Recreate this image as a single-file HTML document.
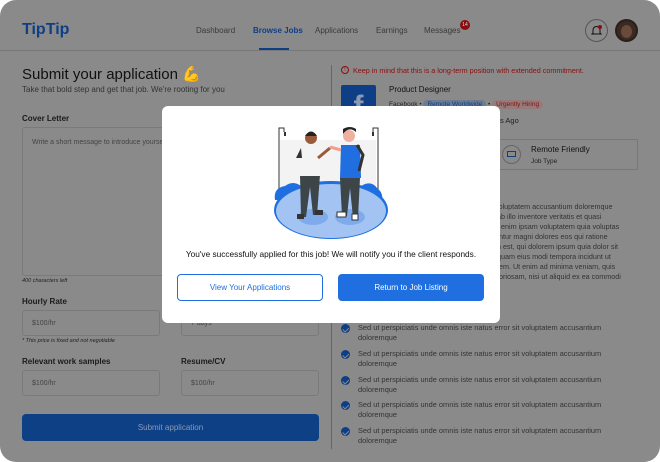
<!DOCTYPE html>
<html><head><meta charset="utf-8"><style>
*{margin:0;padding:0;box-sizing:border-box}
body{width:660px;height:462px;background:#fff;font-family:"Liberation Sans",sans-serif;position:relative;overflow:hidden;color:#1b1b1b}
.card{position:absolute;left:0;top:0;width:660px;height:462px;background:#8a8a8a;border-radius:16px}
.a{position:absolute;white-space:nowrap}
.nav{font-size:8px;color:#3a3a3a;top:26px}
.inp{position:absolute;border:1px solid #7a7a7a;border-radius:3px;font-size:7px;color:#444;padding-left:9px;display:flex;align-items:center}
.lab{font-size:8px;font-weight:bold;color:#1b1b1b}
.lt{font-size:7.2px;color:#333;line-height:10px}
.chk{position:absolute;left:341px;width:9px;height:9px;border-radius:50%;background:#0e3f86}
.chk:after{content:"";position:absolute;left:2.5px;top:1.5px;width:2.5px;height:4.5px;border:solid #8a8a8a;border-width:0 1.2px 1.2px 0;transform:rotate(45deg)}
.ct{position:absolute;left:358px;font-size:7.4px;color:#333;line-height:9.5px;width:262px}
.modal{position:absolute;left:162px;top:106px;width:338px;height:217px;background:#fff;border-radius:6px}
.btn{position:absolute;top:168px;width:146px;height:27px;border-radius:4px;font-size:8px;display:flex;align-items:center;justify-content:center}
</style></head><body>
<div class="card">
<div class="a" style="left:22px;top:21px;font-size:16px;font-weight:bold;color:#0e3f86">TipTip</div>
<div class="a nav" style="left:196px">Dashboard</div>
<div class="a nav" style="left:253px;color:#0e3f86;font-weight:bold">Browse Jobs</div>
<div class="a" style="left:259px;top:48px;width:30px;height:2px;background:#0e3f86"></div>
<div class="a nav" style="left:315px">Applications</div>
<div class="a nav" style="left:376px">Earnings</div>
<div class="a nav" style="left:424px">Messages</div>
<div class="a" style="left:460px;top:20px;width:10px;height:10px;border-radius:50%;background:#8a0d0d;color:#ddd;font-size:5px;text-align:center;line-height:10px">14</div>
<div class="a" style="left:585px;top:19px;width:23px;height:23px;border-radius:50%;border:1px solid #555"></div>
<svg class="a" style="left:590px;top:24px" width="13" height="13" viewBox="0 0 13 13"><path d="M3 9V6a3.5 3.5 0 0 1 7 0v3l1 1H2z" fill="none" stroke="#111" stroke-width="1"/><circle cx="10" cy="3" r="2" fill="#8a0d0d"/></svg>
<div class="a" style="left:615px;top:19px;width:23px;height:23px;border-radius:50%;background:#3a2a22;border:2px solid #2a1e18"></div>
<div class="a" style="left:621px;top:25px;width:11px;height:13px;border-radius:50%;background:#6a4a3a"></div>
<div class="a" style="left:0;top:50px;width:660px;height:1px;background:#777"></div>

<div class="a" style="left:22px;top:65px;font-size:15px;color:#111">Submit your application <span style="color:#7a5a3c">💪</span></div>
<div class="a" style="left:22px;top:85px;font-size:8px;color:#333">Take that bold step and get that job. We're rooting for you</div>
<div class="a lab" style="left:22px;top:114px">Cover Letter</div>
<div class="inp" style="left:22px;top:127px;width:297px;height:149px;align-items:flex-start;padding-top:9px;line-height:11px;white-space:normal">Write a short message to introduce yourself and explain why you're the best fit for this job.</div>
<div class="a" style="left:22px;top:278px;font-size:5.5px;font-style:italic;color:#222">400 characters left</div>
<div class="a lab" style="left:22px;top:297px">Hourly Rate</div>
<div class="inp" style="left:22px;top:310px;width:138px;height:26px">$100/hr</div>
<div class="inp" style="left:181px;top:310px;width:138px;height:26px">7 days</div>
<div class="a" style="left:22px;top:338px;font-size:5.5px;font-style:italic;color:#222">* This price is fixed and not negotiable</div>
<div class="a lab" style="left:22px;top:357px">Relevant work samples</div>
<div class="a lab" style="left:181px;top:357px">Resume/CV</div>
<div class="inp" style="left:22px;top:370px;width:138px;height:26px">$100/hr</div>
<div class="inp" style="left:181px;top:370px;width:138px;height:26px">$100/hr</div>
<div class="a" style="left:22px;top:414px;width:297px;height:27px;background:#0e4086;border-radius:4px;color:#8a9ab5;font-size:8px;display:flex;align-items:center;justify-content:center">Submit application</div>

<div class="a" style="left:331px;top:65px;width:1px;height:384px;background:#666"></div>
<div class="a" style="left:341px;top:66px;width:8px;height:8px;border-radius:50%;border:1px solid #8a0d0d;color:#8a0d0d;font-size:6px;line-height:6px;text-align:center">!</div>
<div class="a" style="left:353px;top:66px;font-size:7.2px;color:#8a0d0d">Keep in mind that this is a long-term position with extended commitment.</div>
<div class="a" style="left:341px;top:85px;width:35px;height:35px;background:#0e3f86;border-radius:2px;color:#8a9ab5;font-size:30px;font-weight:bold;text-align:center;line-height:44px;overflow:hidden">f</div>
<div class="a" style="left:389px;top:85px;font-size:8px;color:#111">Product Designer</div>
<div class="a" style="left:389px;top:101px;font-size:6.5px;color:#222">Facebook • <span style="background:#6c7a92;color:#0e3f86;border-radius:5px;padding:1px 4px">Remote Worldwide</span> • <span style="background:#967b7b;color:#8a0d0d;border-radius:5px;padding:1px 4px">Urgently Hiring</span></div>
<div class="a" style="left:500px;top:116px;font-size:7.5px;color:#222">s Ago</div>
<div class="a" style="left:498px;top:139px;width:140px;height:31px;border:1px solid #777;border-radius:2px"></div>
<div class="a" style="left:502px;top:145px;width:19px;height:19px;border-radius:50%;border:1px solid #666"></div>
<div class="a" style="left:507px;top:151px;width:9px;height:6px;border:1px solid #0e3f86"></div>
<div class="a" style="left:531px;top:145px;font-size:8px;color:#111">Remote Friendly</div>
<div class="a" style="left:531px;top:158px;font-size:6.5px;color:#222">Job Type</div>
<div class="a lt" style="left:491px;top:202px">t voluptatem accusantium doloremque<br>e ab illo inventore veritatis et quasi<br>no enim ipsam voluptatem quia voluptas<br>uuntur magni dolores eos qui ratione<br>am est, qui dolorem ipsum quia dolor sit<br>mquam eius modi tempora incidunt ut<br>tatem. Ut enim ad minima veniam, quis<br>aboriosam, nisi ut aliquid ex ea commodi</div>

<div class="chk" style="top:324px"></div><div class="ct" style="top:323px">Sed ut perspiciatis unde omnis iste natus error sit voluptatem accusantium doloremque</div>
<div class="chk" style="top:350px"></div><div class="ct" style="top:349px">Sed ut perspiciatis unde omnis iste natus error sit voluptatem accusantium doloremque</div>
<div class="chk" style="top:376px"></div><div class="ct" style="top:375px">Sed ut perspiciatis unde omnis iste natus error sit voluptatem accusantium doloremque</div>
<div class="chk" style="top:401px"></div><div class="ct" style="top:400px">Sed ut perspiciatis unde omnis iste natus error sit voluptatem accusantium doloremque</div>
<div class="chk" style="top:427px"></div><div class="ct" style="top:426px">Sed ut perspiciatis unde omnis iste natus error sit voluptatem accusantium doloremque</div>
</div>

<div class="modal">
<svg class="a" style="left:98px;top:14px" width="140" height="125" viewBox="260 120 140 125">
<rect x="280" y="140" width="96" height="55" fill="#f3f3f3"/>
<path d="M279 190V128h5v4M378 190V128h-5v4" fill="none" stroke="#333" stroke-width="1"/>
<rect x="284" y="132" width="2" height="4" fill="#333"/><rect x="372" y="132" width="2" height="4" fill="#333"/>
<path d="M275 200q-2-12 10-14q8-6 16 0l60 0q10-6 16 2q8 6 4 16z" fill="#1f6fe0"/>
<ellipse cx="331" cy="210" rx="57" ry="29" fill="#1f6fe0"/>
<ellipse cx="331" cy="211" rx="55" ry="27" fill="#a3c4f3"/>
<ellipse cx="313" cy="217" rx="15" ry="8" fill="#7fabec"/><ellipse cx="350" cy="217" rx="15" ry="8" fill="#7fabec"/>
<path d="M300 175h20l-3 40h-4l-3-28l-4 30h-5z" fill="#3d4548"/>
<path d="M301 148h18l2 28h-22z" fill="#f4f4f4"/>
<path d="M301 148l-5 10h6z" fill="#333"/>
<path d="M318 158l12-10" stroke="#9a5b3b" stroke-width="3"/>
<circle cx="311" cy="138" r="6" fill="#9a5b3b"/><path d="M305 136q6-9 12 0z" fill="#222"/>
<path d="M340 178h20l-2 40h-5l-3-30l-3 28h-5z" fill="#3d4548"/>
<path d="M341 145h19l1 33h-21z" fill="#1f6fe0"/>
<path d="M357 145l6 10l-4 16" fill="none" stroke="#333" stroke-width="3"/>
<path d="M341 150l-11-3" stroke="#f0a090" stroke-width="3"/>
<circle cx="349" cy="136" r="6" fill="#f0b0a0"/><path d="M343 134q6-8 13-2v-3q-6-4-13 0z" fill="#222"/>
<rect x="297" y="214" width="7" height="5" fill="#333"/><rect x="315" y="210" width="8" height="5" fill="#333"/>
<rect x="337" y="212" width="9" height="5" fill="#fff" stroke="#333" stroke-width="1"/><rect x="352" y="214" width="6" height="6" fill="#fff" stroke="#333"/>
</svg>
<div class="a" style="left:0;width:338px;text-align:center;top:143px;font-size:8.3px;color:#111">You've successfully applied for this job! We will notify you if the client responds.</div>
<div class="btn" style="left:15px;border:1px solid #1f6fe0;color:#1f6fe0">View Your Applications</div>
<div class="btn" style="left:176px;background:#1f6fe0;color:#fff">Return to Job Listing</div>
</div>
</body></html>
